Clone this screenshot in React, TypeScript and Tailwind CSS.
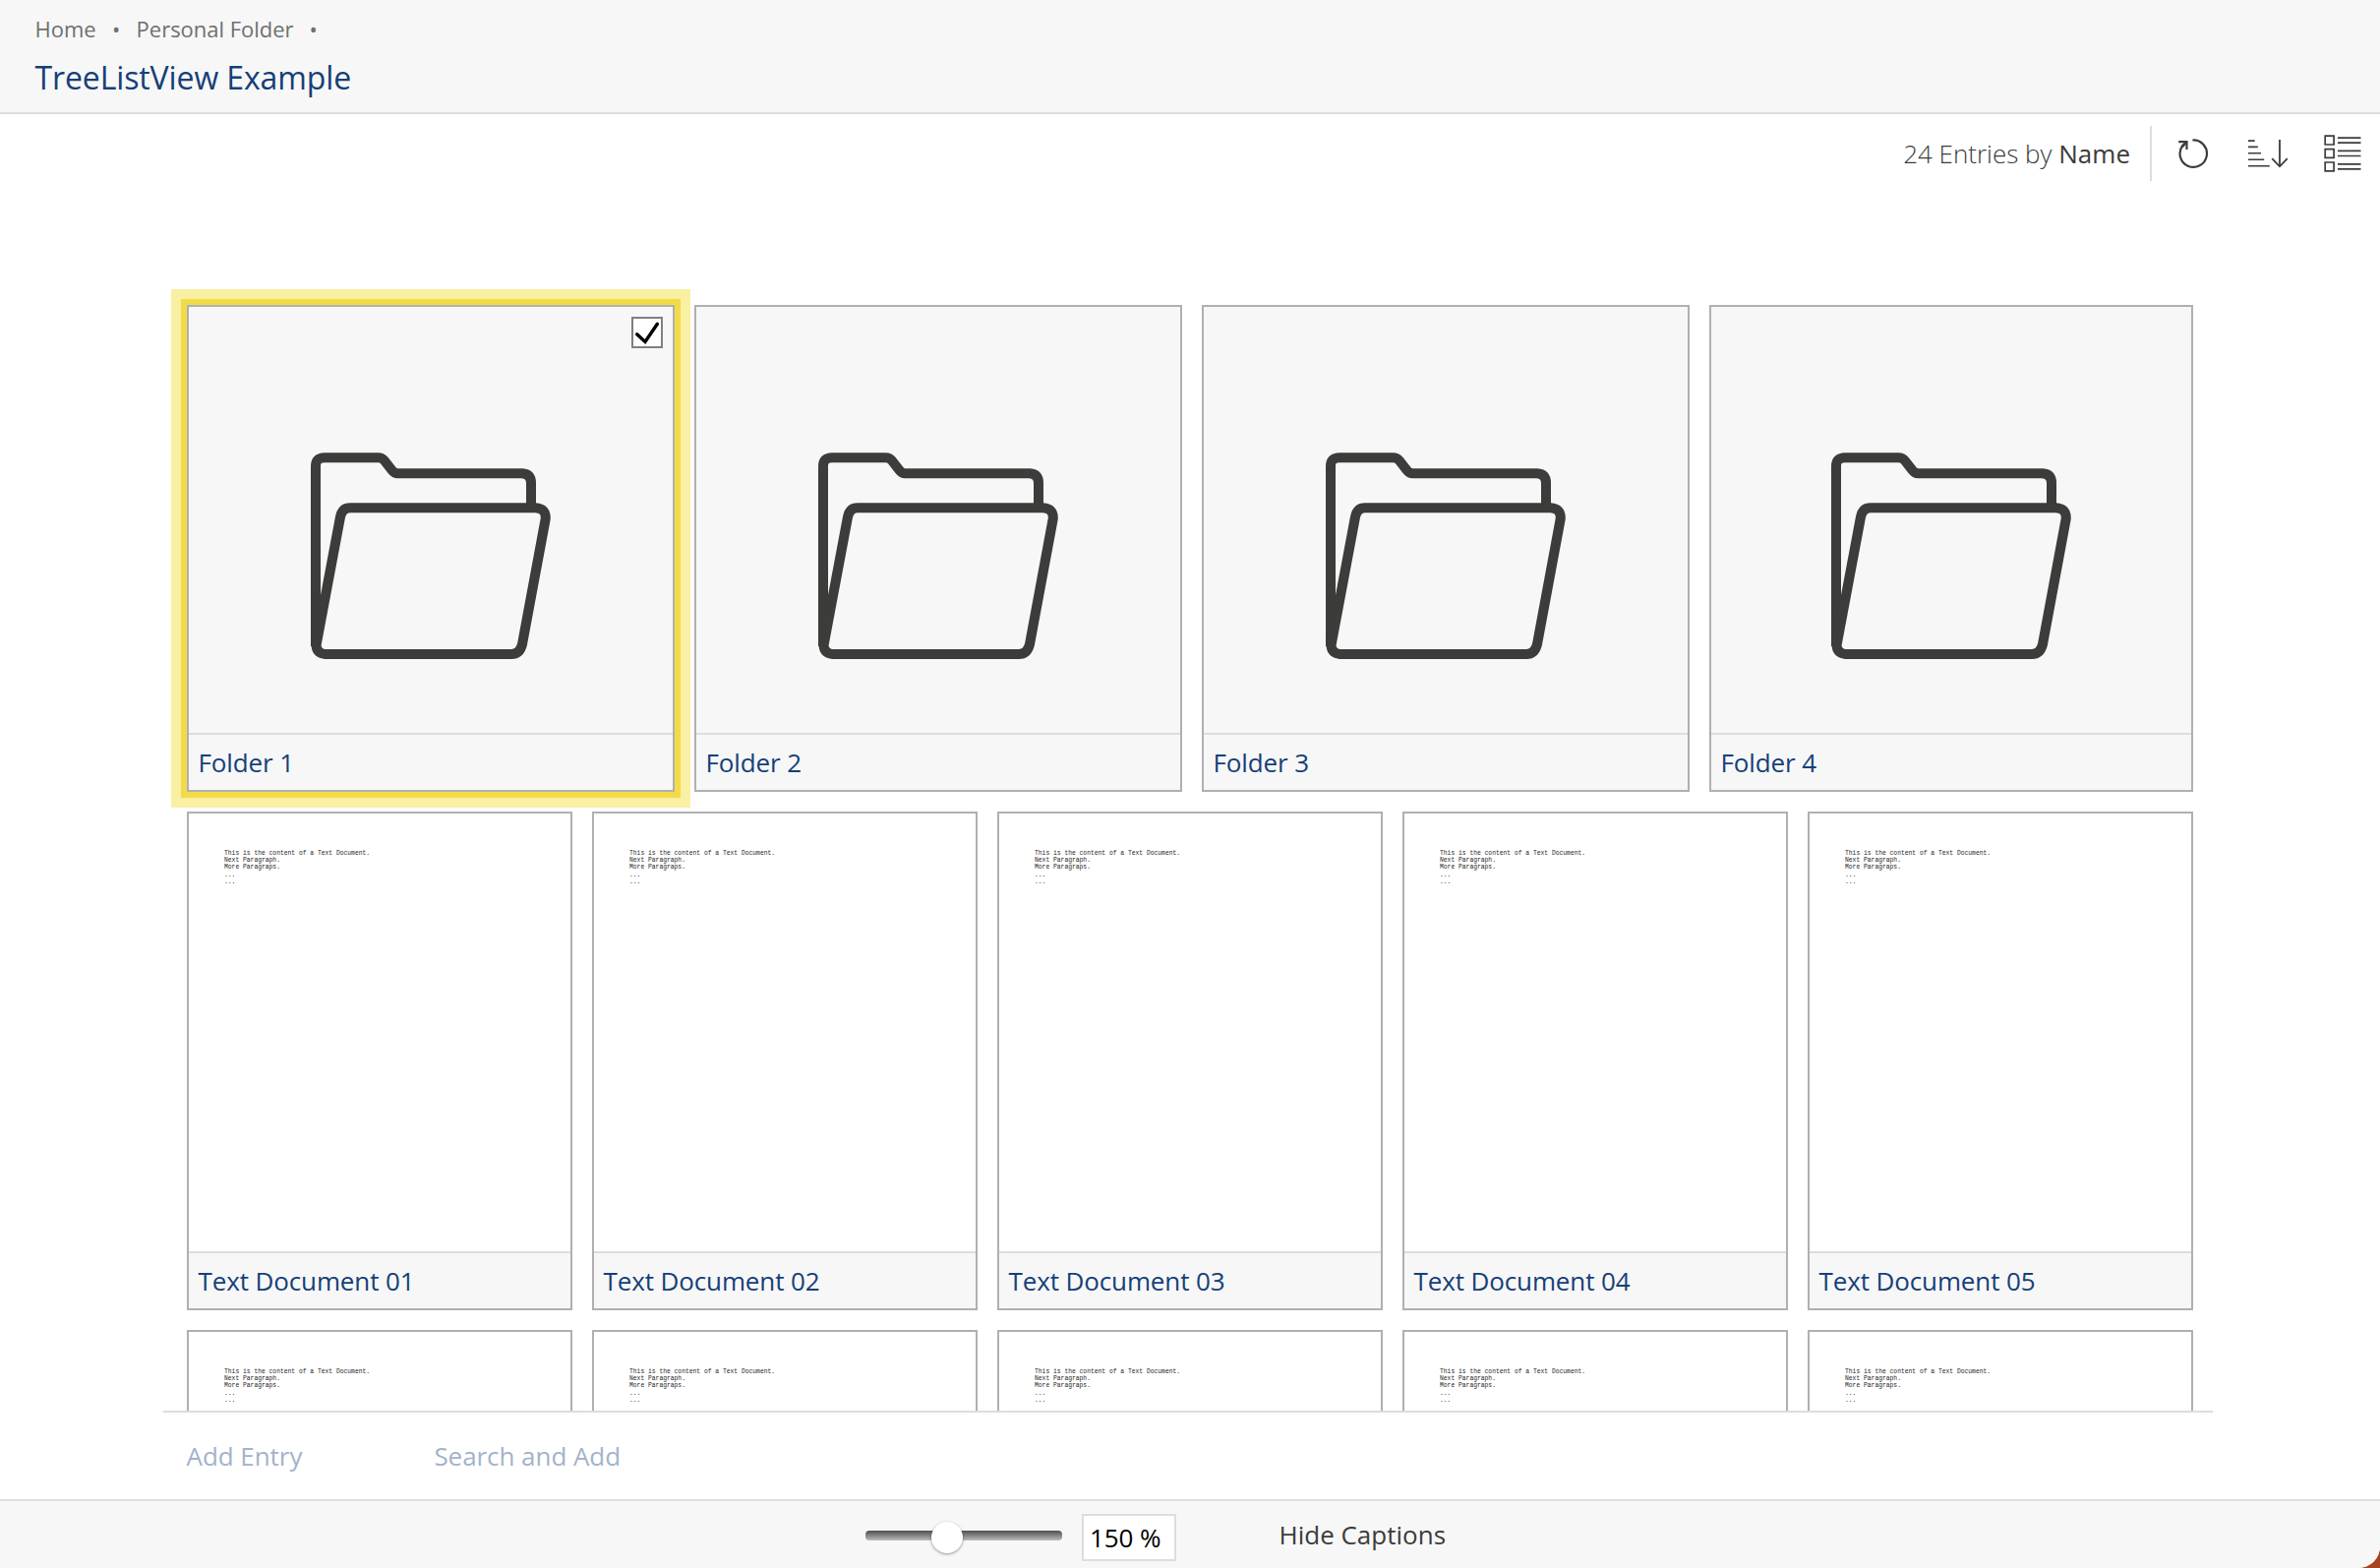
import React from "react";

const folders = ["Folder 1", "Folder 2", "Folder 3", "Folder 4"];
const documents = ["Text Document 01", "Text Document 02", "Text Document 03", "Text Document 04", "Text Document 05"];
const partialRow = [6, 7, 8, 9, 10];

function FolderIcon() {
  return (
    <svg width="244" height="210" viewBox="316 460 244 210" fill="none" stroke="#3c3c3a" strokeWidth="10" className="shrink-0">
      <path d="M321 657V474Q321 465.2 330 465.2H384.500Q388.500 465.200 390.700 468L398.500 478Q401 481.300 404.500 481.300H531Q540 482 540 491V516" />
      <path d="M321.500 656L346 525.500Q348 516.300 356 516.300H544.500Q555.500 517 554.700 527.500L531 655Q528.500 665 520 665H330.500Q322 664 321.500 656Z" />
    </svg>
  );
}

function RefreshIcon() {
  return (
    <svg width="32" height="32" viewBox="2214 140 32 32" fill="none" stroke="#3c3c3a" strokeWidth="2.200">
      <path d="M2229.400 142.500A13.700 13.700 0 1 1 2219.500 147.700" />
      <path d="M2215.200 144.100H2223.500V152" strokeWidth="2.200" />
      <path d="M2223.500 144.100L2218.800 149" strokeWidth="2.800" />
    </svg>
  );
}

function SortIcon() {
  return (
    <svg width="42" height="32" viewBox="2285 140 42 32" fill="none" stroke="#3c3c3a" strokeWidth="1.600">
      <path d="M2286 143.100H2292.700M2286 149.400H2295.800M2286 155.800H2299M2286 162.300H2302.200M2286 168.700H2307.800" />
      <path d="M2318 142V169.300M2310.200 161.200L2318 169.300L2325.800 161.200" strokeWidth="1.800" />
    </svg>
  );
}

function ListIcon() {
  return (
    <svg width="40" height="40" viewBox="2362 136 40 40" fill="none" stroke="#3c3c3a" strokeWidth="1.700">
      <path d="M2364.200 138.200h8.900v8.800h-8.900zM2364.200 151.600h8.900v8.800h-8.900zM2364.200 165h8.900v8.800h-8.900z" />
      <path d="M2377 140.100h23.500M2377 145.100h23.500M2377 153.400h23.500M2377 158.500h23.500M2377 166.800h23.500M2377 171.800h23.500" />
    </svg>
  );
}

function Caption({ children }: { children: React.ReactNode }) {
  return (
    <div className="h-[58px] shrink-0 border-t-2 border-[#dcdce3] bg-[#f7f7f7] pl-[9.5px] text-[26px] leading-[56px] tracking-[-0.12px] text-[#154077]">
      {children}
    </div>
  );
}

function FolderCard({ name, selected }: { name: string; selected: boolean }) {
  return (
    <div
      className={
        "relative flex h-[495px] flex-col border-2 border-[#b0b0b0] bg-[#f7f7f7] " +
        (selected ? "shadow-[0_0_0_6px_#f3db48,0_0_0_16px_#f9f0a3]" : "")
      }
    >
      <div className="flex flex-1 items-start justify-center pt-[148px]">
        <FolderIcon />
      </div>
      {selected && (
        <div className="absolute top-[10px] right-[10px] size-8 border-2 border-[#808080] bg-white">
          <svg width="28" height="28" viewBox="2 2 28 28" fill="none" stroke="#000" strokeWidth="3.400" strokeLinecap="round">
            <path d="M5.700 17.800L14 25.500L26.400 7.300" />
          </svg>
        </div>
      )}
      <Caption>{name}</Caption>
    </div>
  );
}

function DocumentCard({ name }: { name?: string }) {
  return (
    <div className="flex h-[507px] flex-col border-2 border-[#b0b0b0] bg-white">
      <div className="flex-1 pt-[37px] pl-[36px] font-['Liberation_Mono',monospace] text-[6.33px] leading-[7.2px] text-[#1c1c1c]">
        <p>This is the content of a Text Document.</p>
        <p>Next Paragraph.</p>
        <p>More Paragraps.</p>
        <p>...</p>
        <p>...</p>
      </div>
      {name && <Caption>{name}</Caption>}
    </div>
  );
}

export default function App() {
  return (
    <div className="h-[1594px] w-[2420px] overflow-hidden bg-[#a8431f] font-['Open_Sans',sans-serif]">
      <div className="flex h-full flex-col overflow-hidden rounded-br-[22px] bg-white">
        <header className="h-[116px] shrink-0 border-b-2 border-[#dcdce3] bg-[#f7f7f7] pl-[35.5px]">
          <nav className="flex h-[58px] items-center text-[22px] tracking-[-0.02px] text-[#6f6f6f]">
            <span>Home</span>
            <span className="w-[41px] text-center">•</span>
            <span>Personal Folder</span>
            <span className="w-[40px] text-center">•</span>
          </nav>
          <h1 className="mt-[3px] text-[32px] leading-[36px] tracking-[-0.12px] text-[#154077]">TreeListView Example</h1>
        </header>

        <div className="mt-3 flex h-14 shrink-0 items-center justify-end pr-[18px]">
          <div className="flex h-full items-center border-r-2 border-[#dcdce3] pr-[20px] text-[26px] font-light whitespace-pre text-[#3c3c3a]">
            24 Entries by <span className="font-normal">Name</span>
          </div>
          <div className="ml-[26px]"><RefreshIcon /></div>
          <div className="ml-[39px]"><SortIcon /></div>
          <div className="ml-[35px]"><ListIcon /></div>
        </div>

        <main className="mt-[90px] ml-[166px] flex h-[1162px] w-[2084px] shrink-0 flex-col overflow-hidden border-b-2 border-[#dcdce3] px-6 pt-[36px] pr-[20px]">
          <div className="grid shrink-0 grid-cols-[496px_496px_496px_492px] gap-5">
            {folders.map((name, i) => (
              <FolderCard key={name} name={name} selected={i === 0} />
            ))}
          </div>
          <div className="mt-5 grid shrink-0 grid-cols-5 gap-5">
            {documents.map((name) => (
              <DocumentCard key={name} name={name} />
            ))}
            {partialRow.map((n) => (
              <DocumentCard key={n} />
            ))}
          </div>
        </main>

        <div className="flex h-[88px] shrink-0 items-center gap-[134px] pl-[189.5px] text-[26px] tracking-[-0.05px] text-[#a3b3ca]">
          <span>Add Entry</span>
          <span>Search and Add</span>
        </div>

        <footer className="flex flex-1 items-start border-t-2 border-[#dcdce3] bg-[#f7f7f7] pl-[880px] text-[26px]">
          <div className="relative mt-[30px] h-[10px] w-[200px] rounded-[4px] bg-linear-to-b from-[#505050] to-[#bcbcbc]">
            <div className="absolute -top-[9px] left-[67px] size-8 rounded-full bg-white shadow-[0_1px_3px_rgba(0,0,0,0.4)]" />
          </div>
          <div className="mt-[13px] ml-5 h-12 w-24 border-2 border-[#dcdce3] bg-white pl-[6px] leading-[44px] tracking-[-0.1px] text-black">150 %</div>
          <div className="mt-[10px] ml-[104.5px] leading-[48px] text-[#3c3c3a]">Hide Captions</div>
        </footer>
      </div>
    </div>
  );
}
